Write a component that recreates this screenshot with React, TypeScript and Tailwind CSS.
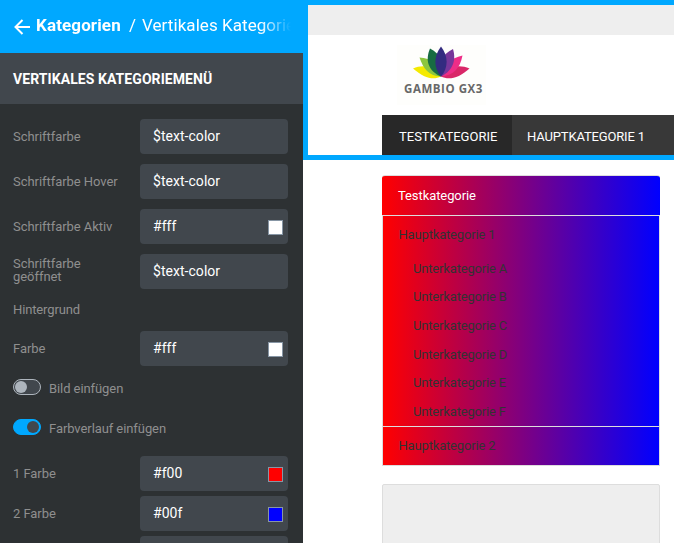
type FieldProps = { label: string; value: string; swatch?: string; gap: string; twoLine?: boolean };

function Field({ label, value, swatch, gap, twoLine }: FieldProps) {
  return (
    <div className={`flex h-[35px] shrink-0 items-center ${gap}`}>
      <label
        className={`w-[127px] pr-4 text-[13px] leading-[13px] tracking-[-0.05px] text-[#8f8f8f] ${twoLine ? "pb-[3px]" : ""}`}
      >
        {label}
      </label>
      <div className="flex h-[35px] w-[148px] items-center justify-between rounded-[4px] bg-[#41474d] pr-[5px] pl-[13px] text-[14px] leading-[18px] tracking-[0.04px] text-white">
        <span className="pb-[2px]">{value}</span>
        {swatch && <span className={`mt-[2px] h-[15px] w-[15px] border border-[#8796a5] ${swatch}`} />}
      </div>
    </div>
  );
}

function Toggle({ on, label, gap }: { on?: boolean; label: string; gap: string }) {
  return (
    <div className={`flex h-4 shrink-0 items-center ${gap}`}>
      <span
        className={`flex h-4 w-7 items-center rounded-full border ${
          on ? "justify-end border-[#00a8ff] bg-[#00a8ff]" : "border-[#adb5bd] bg-[#41474d] pl-px"
        }`}
      >
        <span className={`h-3 w-3 rounded-full ${on ? "mr-px bg-[#41474d]" : "bg-[#adb5bd]"}`} />
      </span>
      <span className="mt-[3px] ml-2 text-[13px] leading-4 tracking-[-0.08px] text-[#8f8f8f]">{label}</span>
    </div>
  );
}

function Logo() {
  return (
    <svg width="90" height="60" viewBox="0 0 90 60" className="block">
      <rect width="89" height="60" fill="#fefefc" />
      <path d="M16 23.5C26 19 37 21 44 31.5C36 35.5 27 33 16 23.5Z" fill="#f4ea00" />
      <path d="M72.5 23.5C62 19 51 21 44 31.5C52 35.5 62 33 72.5 23.5Z" fill="#d92768" />
      <path d="M22.5 12.5C34 13 43 20 44 31.5C32 31.5 26 23 22.5 12.5Z" fill="#8cc63f" />
      <path d="M65.5 10.5C54 13 45 20 44 31.5C57 30.5 63 23 65.5 10.5Z" fill="#ee2d87" />
      <path d="M33 3.5C44 9 48 19 44 31.5C31 26 28 15 33 3.5Z" fill="#176b42" />
      <path d="M56 4C45 9 40 20 44 31.5C57 25 59 14 56 4Z" fill="#76369a" />
      <path d="M44 1.5C51.5 11 51.5 23 44 31.5C36.5 23 36.5 11 44 1.5Z" fill="#332b80" />
      <text
        x="7"
        y="48"
        textLength="78.4"
        fontFamily="'Open Sans', sans-serif"
        fontSize="11.5"
        fontWeight="700"
        fill="#686868"
      >
        GAMBIO GX3
      </text>
    </svg>
  );
}

const subcategories = ["A", "B", "C", "D", "E", "F"];

export default function App() {
  return (
    <div className="flex h-[543px] w-[674px] overflow-hidden bg-white font-['Roboto',sans-serif]">
      <aside className="flex w-[303px] shrink-0 flex-col overflow-hidden bg-[#2d3133]">
        <header className="flex h-[53px] shrink-0 items-center bg-[#00a8ff] pr-[12px] pb-[3px] pl-[14px] text-[17px] leading-5 whitespace-nowrap text-white">
          <svg width="17" height="16" viewBox="0 0 17 16" className="mt-[3px] mr-[5px] shrink-0" fill="none" stroke="white" strokeWidth="2">
            <path d="M16 8H2M8.5 1L1.5 8L8.5 15" />
          </svg>
          <div className="flex min-w-0 flex-1 overflow-hidden mask-r-from-88% mask-r-to-100%">
            <span className="w-[93px] shrink-0 font-bold tracking-[0.12px]">Kategorien</span>
            <span className="w-[13px] shrink-0">/</span>
            <span className="tracking-[0.06px]">Vertikales Kategoriemenü</span>
          </div>
        </header>
        <h1 className="flex h-[51px] shrink-0 items-center bg-[#41474d] pl-[13px] text-[14px] leading-4 font-bold tracking-[0.07px] text-white">
          VERTIKALES KATEGORIEMENÜ
        </h1>
        <div className="flex flex-col pl-[13px]">
          <Field label="Schriftfarbe" value="$text-color" gap="mt-[15px]" />
          <Field label="Schriftfarbe Hover" value="$text-color" gap="mt-[10px]" />
          <Field label="Schriftfarbe Aktiv" value="#fff" swatch="bg-white" gap="mt-[10px]" />
          <Field label="Schriftfarbe geöffnet" value="$text-color" gap="mt-[10px]" twoLine />
          <h2 className="mt-[13px] text-[13px] leading-4 tracking-[-0.13px] text-[#8f8f8f]">Hintergrund</h2>
          <Field label="Farbe" value="#fff" swatch="bg-white" gap="mt-[13px]" />
          <Toggle label="Bild einfügen" gap="mt-[13px]" />
          <Toggle on label="Farbverlauf einfügen" gap="mt-[24px]" />
          <Field label="1 Farbe" value="#f00" swatch="bg-[#ff0000]" gap="mt-[21px]" />
          <Field label="2 Farbe" value="#00f" swatch="bg-[#0000ff]" gap="mt-[5px]" />
          <Field label="" value="" gap="mt-[5px]" />
        </div>
      </aside>

      <main className="flex min-w-0 flex-1 flex-col">
        <section className="h-[160px] shrink-0 border-y-[5px] border-l-[5px] border-[#00a8ff] bg-white">
          <div className="h-[30px] bg-[#eeeeee]" />
          <div className="flex h-[80px] pt-[10px] pl-[89px]">
            <Logo />
          </div>
          <nav className="ml-[74px] flex h-[40px] bg-[#383838] text-[13px] leading-4 whitespace-nowrap text-white">
            <span className="flex w-[130px] items-center bg-[#282828] pt-[3px] pl-[17px]">TESTKATEGORIE</span>
            <span className="flex items-center pt-[3px] pl-[15px] tracking-[-0.15px]">HAUPTKATEGORIE 1</span>
          </nav>
        </section>

        <section className="mt-[15px] ml-[79px] flex h-[291px] w-[278px] shrink-0 flex-col text-[13px] leading-4 tracking-[-0.17px] text-[#333333]">
          <div className="flex h-[40px] shrink-0 items-center rounded-t-[3px] border-t border-[#dddddd] bg-linear-to-r/srgb from-[#ff0000] to-[#0000ff] pl-4 tracking-[-0.08px] text-white">
            Testkategorie
          </div>
          <div className="flex flex-1 flex-col border border-[#dddddd]">
            <div className="flex h-[210px] flex-col bg-linear-to-r/srgb from-[#ff0000] to-[#0000ff]">
              <div className="flex h-[38.6px] items-center pl-[15.5px]">Hauptkategorie 1</div>
              {subcategories.map((letter) => (
                <div key={letter} className="flex h-[28.57px] items-center pl-[30px]">
                  Unterkategorie {letter}
                </div>
              ))}
            </div>
            <div className="flex flex-1 items-center border-t border-[#dddddd] bg-linear-to-r/srgb from-[#ff0000] to-[#0000ff] pl-[15.5px]">
              Hauptkategorie 2
            </div>
          </div>
        </section>
        <section className="mt-[18px] ml-[79px] h-[80px] w-[278px] shrink-0 rounded-[2px] border border-[#dddddd] bg-[#eeeeee]" />
      </main>
    </div>
  );
}
